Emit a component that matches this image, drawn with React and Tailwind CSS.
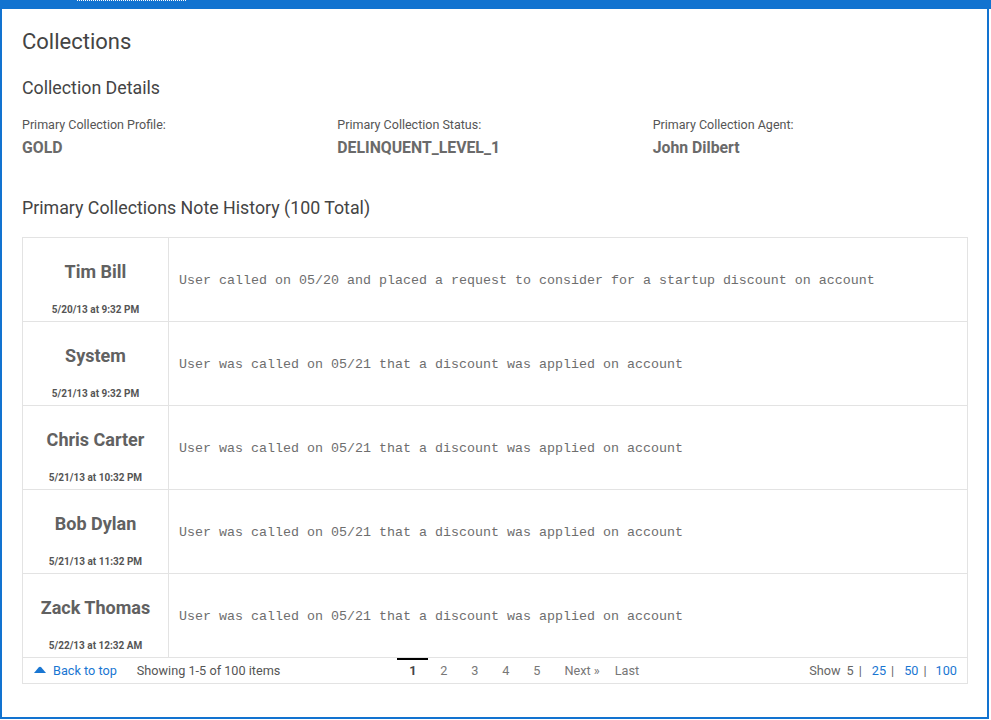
import React from 'react';

const notes = [
  { name: 'Tim Bill', date: '5/20/13 at 9:32 PM', text: 'User called on 05/20 and placed a request to consider for a startup discount on account' },
  { name: 'System', date: '5/21/13 at 9:32 PM', text: 'User was called on 05/21 that a discount was applied on account' },
  { name: 'Chris Carter', date: '5/21/13 at 10:32 PM', text: 'User was called on 05/21 that a discount was applied on account' },
  { name: 'Bob Dylan', date: '5/21/13 at 11:32 PM', text: 'User was called on 05/21 that a discount was applied on account' },
  { name: 'Zack Thomas', date: '5/22/13 at 12:32 AM', text: 'User was called on 05/21 that a discount was applied on account' },
];

const details = [
  { label: 'Primary Collection Profile:', value: 'GOLD' },
  { label: 'Primary Collection Status:', value: 'DELINQUENT_LEVEL_1' },
  { label: 'Primary Collection Agent:', value: 'John Dilbert' },
];

const NoteRow = ({ note }) => (
  <div className="flex h-[84px] border-b border-[#e3e3e3]">
    <div className="w-[146px] shrink-0 border-r border-[#e3e3e3] flex flex-col items-center pt-[23px]">
      <div className="text-[18px] leading-[22px] font-bold text-[#616161]">{note.name}</div>
      <div className="mt-[21px] text-[10px] leading-[12px] font-bold text-[#555]">{note.date}</div>
    </div>
    <div className="flex-1 flex items-center pl-[10px] pt-[3px]">
      <span className="text-[13.33px] text-[#6e6e6e] whitespace-nowrap" style={{ fontFamily: '"Liberation Mono", "Courier New", monospace' }}>
        {note.text}
      </span>
    </div>
  </div>
);

const App = () => {
  return (
    <div className="w-[991px] h-[720px] bg-white text-[#444]" style={{ fontFamily: 'Roboto, "Liberation Sans", sans-serif' }}>
      {/* top bar */}
      <div className="relative h-[9px] bg-[#1273d0]">
        <div className="absolute left-[77px] top-0 w-[109px] border-t border-dotted border-white"></div>
      </div>

      <div className="w-[989px] h-[710px] border-l-2 border-r-2 border-b-2 border-[#1273d0] px-[20px] pt-[19px]">
        <h1 className="text-[22px] leading-[28px] text-[#444]">Collections</h1>

        <h2 className="mt-[20px] text-[17.8px] leading-[24px] text-[#444]">Collection Details</h2>

        <div className="mt-[17px] grid grid-cols-3 w-[946px]">
          {details.map(d => (
            <div key={d.label}>
              <div className="text-[12.5px] leading-[16px] text-[#555]">{d.label}</div>
              <div className="mt-[5px] text-[15.8px] leading-[20px] font-bold text-[#6a6a6a]">{d.value}</div>
            </div>
          ))}
        </div>

        <h2 className="mt-[38px] text-[17.8px] leading-[24px] text-[#444]">Primary Collections Note History (100 Total)</h2>

        {/* Note table */}
        <div className="mt-[17px] w-[946px] border border-[#e3e3e3]">
          {notes.map(n => (
            <NoteRow key={n.name} note={n} />
          ))}

          {/* footer */}
          <div className="h-[25px] flex items-center text-[12.7px] text-[#555]">
            <div className="flex items-center ml-[11px] text-[#1976d2]">
              <svg width="12" height="7" viewBox="0 0 12 7" className="mr-[7px] mb-[1px]">
                <path d="M0 7 L4.6 1.5 Q6 0 7.4 1.5 L12 7 Z" fill="#1976d2" />
              </svg>
              <span>Back to top</span>
            </div>
            <span className="ml-[20px]">Showing 1-5 of 100 items</span>

            <div className="ml-[117px] flex items-center h-full text-[#777]">
              <span className="w-[31px] h-full flex items-center justify-center font-bold text-[#444] border-t-2 border-black -mt-[1px]">1</span>
              <span className="w-[31px] text-center">2</span>
              <span className="w-[31px] text-center">3</span>
              <span className="w-[31px] text-center">4</span>
              <span className="w-[31px] text-center">5</span>
              <span className="ml-[12px]">Next »</span>
              <span className="ml-[15px]">Last</span>
            </div>

            <div className="ml-auto mr-[10px] flex items-center text-[#666]">
              <span>Show</span>
              <span className="ml-[6px]">5</span>
              <span className="ml-[5px] mr-[10px]">|</span>
              <span className="text-[#1976d2]">25</span>
              <span className="ml-[5px] mr-[10px]">|</span>
              <span className="text-[#1976d2]">50</span>
              <span className="ml-[5px] mr-[9px]">|</span>
              <span className="text-[#1976d2]">100</span>
            </div>
          </div>
        </div>
      </div>
    </div>
  );
};

export default App;
